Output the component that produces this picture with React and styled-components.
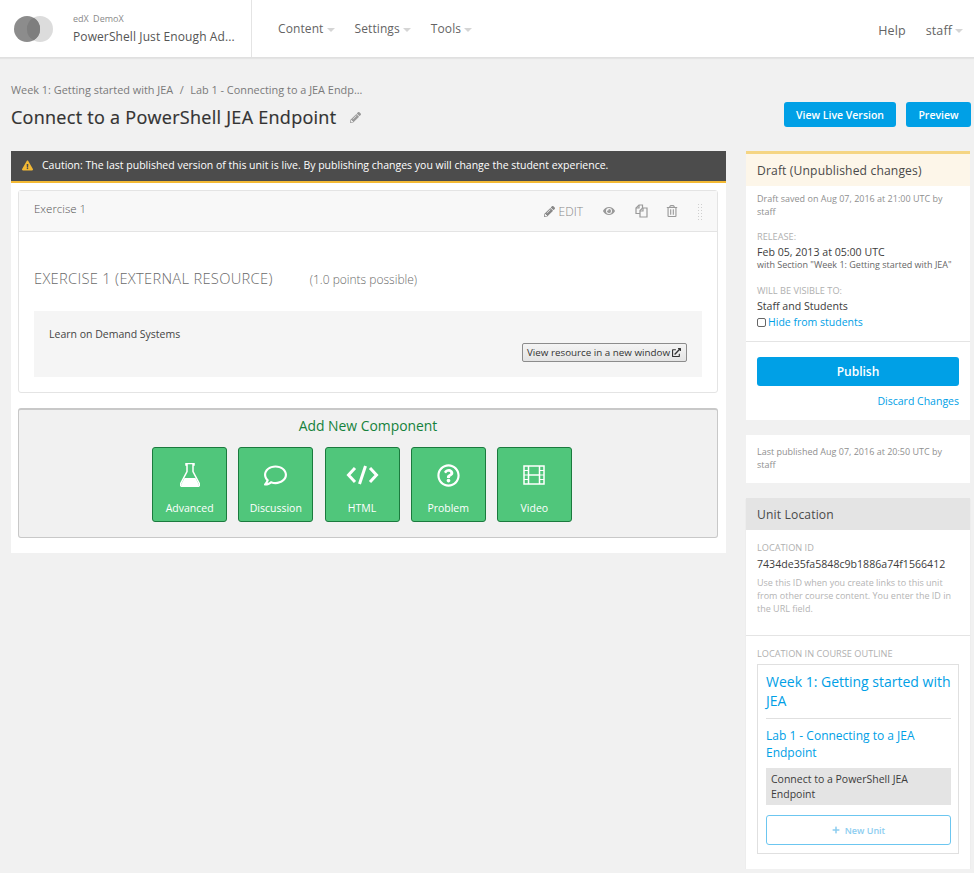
import React from 'react';
import styled, { createGlobalStyle } from 'styled-components';
import {
  FaPencilAlt,
  FaEye,
  FaRegTrashAlt,
  FaRegComment,
  FaRegQuestionCircle,
  FaExclamationTriangle,
  FaExternalLinkAlt,
  FaPlus,
} from 'react-icons/fa';

const blue = '#00a0e6';

const GlobalStyle = createGlobalStyle`
  html, body {
    margin: 0;
    padding: 0;
    background: #f1f1f1;
    font-family: "Open Sans", "Liberation Sans", sans-serif;
    color: #3c3c3c;
  }
  * {
    box-sizing: border-box;
  }
`;

const Header = styled.header`
  display: flex;
  align-items: stretch;
  height: 58px;
  background: #fff;
  border-bottom: 1px solid #e0e0e0;
  box-shadow: 0 1px 1px rgba(0, 0, 0, 0.05);
`;

const Brand = styled.div`
  display: flex;
  align-items: center;
  width: 252px;
  padding-left: 14px;
  border-right: 1px solid #e4e4e4;
`;

const CourseInfo = styled.div`
  margin-left: 19px;
  width: 165px;
`;

const Org = styled.div`
  font-size: 9px;
  line-height: 14px;
  color: #8a8a8a;
  word-spacing: 2px;
`;

const CourseName = styled.div`
  margin-top: 2px;
  font-size: 12px;
  line-height: 17px;
  color: #555;
  letter-spacing: 0.1px;
  white-space: nowrap;
`;

const Nav = styled.nav`
  display: flex;
  align-items: center;
  flex: 1;
  padding-left: 26px;
  gap: 20px;
`;

const NavItem = styled.span`
  display: inline-flex;
  align-items: center;
  font-size: ${(props) => props.$size || 12}px;
  color: #646464;
  letter-spacing: 0.1px;
`;

const Caret = styled.i`
  display: inline-block;
  margin-left: 3px;
  margin-top: 2px;
  border-left: 4px solid transparent;
  border-right: 4px solid transparent;
  border-top: 4px solid #d5d5d5;
`;

const UserNav = styled.div`
  display: flex;
  align-items: center;
  gap: 20px;
  padding: 3px 11px 0 0;
`;

const Page = styled.div`
  padding: 0 3px 0 11px;
`;

const TitleBar = styled.div`
  display: flex;
  justify-content: space-between;
  align-items: flex-start;
  padding-top: 24px;
`;

const Crumbs = styled.div`
  font-size: 10.9px;
  line-height: 16px;
  color: #7a7a7a;
  white-space: pre;
`;

const CrumbSep = styled.span`
  margin: 0 6.5px;
`;

const PageTitle = styled.h1`
  display: flex;
  align-items: center;
  margin: 6px 0 0;
  font-size: 18px;
  line-height: 26px;
  font-weight: 400;
  color: #333;
  letter-spacing: 0.28px;
  -webkit-text-stroke: 0.2px #333;
`;

const TitleEdit = styled.span`
  display: inline-flex;
  margin-left: 14px;
  color: #9a9a9a;
  font-size: 11px;
`;

const Actions = styled.div`
  display: flex;
  gap: 10px;
  margin-top: 20px;
`;

const ActionButton = styled.button`
  height: 25px;
  width: ${(props) => props.$width}px;
  padding: 0;
  border: 0;
  border-radius: 3px;
  background: ${blue};
  color: #fff;
  font: 600 10.5px "Open Sans", sans-serif;
`;

const Columns = styled.div`
  display: flex;
  align-items: flex-start;
  gap: 20px;
  margin-top: 21px;
`;

const Main = styled.main`
  width: 715px;
  background: #fff;
  padding-bottom: 15px;
`;

const Alert = styled.div`
  display: flex;
  align-items: center;
  height: 32px;
  padding: 0 0 2px 11px;
  background: #4c4c4c;
  border-bottom: 2px solid #f3b934;
  color: #fff;
  font-size: 10.5px;
`;

const AlertIcon = styled.span`
  display: inline-flex;
  margin-right: 9px;
  color: #f3b934;
  font-size: 11px;
`;

const Block = styled.section`
  margin: 7px 8px 0 7px;
  border: 1px solid #e4e4e4;
  border-radius: 3px;
  background: #fff;
  height: 203px;
`;

const BlockHead = styled.div`
  display: flex;
  justify-content: space-between;
  align-items: center;
  height: 41px;
  padding: 0 14px 0 15px;
  background: #f8f8f8;
  border-bottom: 1px solid #e4e4e4;
`;

const BlockName = styled.div`
  margin-top: -6px;
  font-size: 11.5px;
  font-weight: 300;
  color: #555;
`;

const BlockTools = styled.div`
  display: flex;
  align-items: center;
  color: #9a9a9a;
  font-size: 11px;
`;

const EditTool = styled.span`
  display: inline-flex;
  align-items: center;
  gap: 4px;
  font-size: 12px;
  font-weight: 300;
  color: #888;
  margin-right: 20px;
`;

const Tool = styled.span`
  display: inline-flex;
  margin-right: ${(props) => props.$gap}px;
  font-size: 12px;
`;

const Grip = styled.span`
  display: block;
  width: 6px;
  height: 17px;
  background-image: radial-gradient(#cfcfcf 1px, transparent 1px);
  background-size: 3px 3px;
`;

const BlockBody = styled.div`
  padding: 36px 15px 0;
`;

const ProblemTitle = styled.div`
  display: flex;
  align-items: baseline;
  font-size: 14.7px;
  line-height: 20px;
  font-weight: 300;
  color: #6a6a6a;
  letter-spacing: 0.3px;
`;

const Points = styled.span`
  margin-left: 37px;
  font-size: 12px;
  letter-spacing: 0;
`;

const ResourceBox = styled.div`
  display: flex;
  flex-direction: column;
  height: 66px;
  margin-top: 21px;
  padding: 15px 15px 0;
  background: #f5f5f5;
`;

const ResourceText = styled.div`
  font-size: 10.5px;
  line-height: 16px;
  color: #444;
`;

const ResourceButton = styled.button`
  display: inline-flex;
  align-items: center;
  align-self: flex-end;
  gap: 2px;
  width: 165px;
  height: 19px;
  margin-top: 1px;
  padding: 0 4px;
  background: linear-gradient(#f4f4f4, #e4e4e4);
  border: 1px solid #8c8c8c;
  border-radius: 2px;
  color: #333;
  font: 400 9.8px "Open Sans", sans-serif;
  white-space: nowrap;
`;

const AddPanel = styled.section`
  height: 130px;
  margin: 15px 8px 0 7px;
  padding-top: 6px;
  background: #f1f1f1;
  border: 1px solid #c8c8c8;
  border-top-width: 2px;
  border-radius: 3px;
`;

const AddTitle = styled.div`
  text-align: center;
  font-size: 13.9px;
  line-height: 19px;
  color: #15823c;
`;

const AddGrid = styled.div`
  display: flex;
  justify-content: center;
  gap: 11.2px;
  margin-top: 12px;
  padding-right: 12px;
`;

const AddButton = styled.button`
  display: flex;
  flex-direction: column;
  align-items: center;
  width: 75px;
  height: 75px;
  padding: 15px 0 0;
  background: #50c67b;
  border: 1px solid #1b7a3e;
  border-radius: 3px;
  color: #fff;
  font: 400 10.5px "Open Sans", sans-serif;
`;

const AddIcon = styled.span`
  display: flex;
  align-items: center;
  justify-content: center;
  height: 24px;
  font-size: 23px;
`;

const AddLabel = styled.span`
  margin-top: 14px;
  line-height: 14px;
`;

const Sidebar = styled.aside`
  display: flex;
  flex-direction: column;
  gap: 15px;
  width: 224px;
`;

const Card = styled.div`
  background: #fff;
  border-top: ${(props) => (props.$accent ? '3px solid #f5d583' : '0')};
  box-shadow: ${(props) => (props.$shadow ? '0 1px 1px rgba(0, 0, 0, 0.1)' : 'none')};
`;

const CardHead = styled.div`
  display: flex;
  align-items: center;
  height: 32px;
  padding: 0 11px;
  background: ${(props) => props.$bg};
  font-size: 12.1px;
  color: #4a4a4a;
  letter-spacing: 0.15px;
`;

const Section = styled.div`
  padding: ${(props) => props.$padding};
  border-bottom: ${(props) => (props.$rule ? '1px solid #e4e4e4' : '0')};
`;

const Small = styled.div`
  font-size: 9px;
  line-height: 13px;
  color: #8f8f8f;
`;

const Label = styled.div`
  margin-top: ${(props) => props.$top || 0}px;
  font-size: 9.2px;
  line-height: 13px;
  color: #b0b0b0;
  text-transform: uppercase;
`;

const Value = styled.div`
  margin-top: ${(props) => props.$top || 0}px;
  font-size: 10.6px;
  line-height: 16px;
  color: #3c3c3c;
`;

const Detail = styled.div`
  margin-top: -1px;
  font-size: 9px;
  line-height: 12px;
  color: #666;
  white-space: nowrap;
`;

const HideRow = styled.div`
  display: flex;
  align-items: center;
  font-size: 10.5px;
  line-height: 16px;
  color: ${blue};
`;

const Check = styled.span`
  display: inline-block;
  width: 9px;
  height: 9px;
  margin-right: 2px;
  background: #fff;
  border: 1px solid #666;
  border-radius: 2px;
`;

const PublishButton = styled.button`
  display: block;
  width: 202px;
  height: 29px;
  padding: 0 0 1px;
  background: ${blue};
  border: 0;
  border-radius: 3px;
  color: #fff;
  font: 600 12px "Open Sans", sans-serif;
`;

const Discard = styled.div`
  margin-top: 7px;
  text-align: right;
  font-size: 10.5px;
  line-height: 16px;
  color: ${blue};
`;

const Hint = styled.div`
  margin-top: 4px;
  font-size: 9px;
  line-height: 13px;
  color: #b4b4b4;
`;

const Outline = styled.div`
  margin-top: 4px;
  padding: 7px 7px 8px 8px;
  border: 1px solid #e0e0e0;
`;

const OutlineSection = styled.div`
  padding-bottom: 8px;
  border-bottom: 1px solid #e0e0e0;
  font-size: 14px;
  line-height: 19px;
  color: ${blue};
`;

const OutlineSub = styled.div`
  margin-top: 8px;
  font-size: 12px;
  line-height: 17px;
  color: ${blue};
`;

const OutlineUnit = styled.div`
  margin-top: 7px;
  padding: 4px 5px 3px;
  background: #e4e4e4;
  font-size: 10.5px;
  line-height: 15px;
  color: #3c3c3c;
`;

const NewUnit = styled.button`
  display: flex;
  align-items: center;
  justify-content: center;
  gap: 5px;
  width: 100%;
  height: 30px;
  margin-top: 10px;
  padding: 0;
  background: #fff;
  border: 1px solid #6cc6f0;
  border-radius: 3px;
  color: #8ccdf0;
  font: 600 9px "Open Sans", sans-serif;
`;

function Logo() {
  return (
    <svg width="40" height="28" viewBox="0 0 40 28">
      <circle cx="26" cy="14" r="13" fill="#dcdcdc" />
      <circle cx="13" cy="14" r="13" fill="#8c8c8c" />
      <path d="M19.5 2.7a13 13 0 0 1 0 22.6a13 13 0 0 1 0-22.6z" fill="#7e7e7e" />
    </svg>
  );
}

function CopyIcon() {
  return (
    <svg width="13" height="14" viewBox="0 0 13 14" fill="none" stroke="currentColor" strokeWidth="1.2">
      <path d="M5 9.5H1V4l3-3h3.5v3" />
      <path d="M4 1v3H1" />
      <path d="M5 13V6.5L7.5 4H12v9z" />
      <path d="M8 4v3H5" />
    </svg>
  );
}

function FlaskIcon() {
  return (
    <svg width="20" height="24" viewBox="0 0 20 24">
      <path d="M6 .5h8v1.6h-1v6.4l6.4 12.2c.6 1.3-.2 2.8-1.8 2.8H2.4C.8 23.5 0 22 .6 20.7L7 8.5V2.1H6z" fill="none" stroke="#fff" strokeWidth="1.5" />
      <path d="M4.5 15h11l3.3 6.2c.4.9-.2 1.8-1.2 1.8H2.4c-1 0-1.6-.9-1.2-1.8z" fill="#fff" />
    </svg>
  );
}

function CodeIcon() {
  return (
    <svg width="33" height="20" viewBox="0 0 33 20" fill="none" stroke="#fff" strokeWidth="3">
      <polyline points="9,3 2.5,10 9,17" />
      <polyline points="24,3 30.5,10 24,17" />
      <line x1="19.5" y1="1" x2="13.5" y2="19" />
    </svg>
  );
}

function FilmIcon() {
  return (
    <svg width="22" height="20" viewBox="0 0 22 20" fill="none" stroke="#fff" strokeWidth="1.5">
      <rect x="1" y="1" width="20" height="18" />
      <path d="M5.5 1v18M16.5 1v18M5.5 10h11" />
      <path d="M1 5.5h4.5M1 10h4.5M1 14.5h4.5M16.5 5.5H21M16.5 10H21M16.5 14.5H21" strokeWidth="1.2" />
    </svg>
  );
}

const addItems = [
  { label: 'Advanced', icon: <FlaskIcon /> },
  { label: 'Discussion', icon: <FaRegComment /> },
  { label: 'HTML', icon: <CodeIcon /> },
  { label: 'Problem', icon: <FaRegQuestionCircle /> },
  { label: 'Video', icon: <FilmIcon /> },
];

export default function App() {
  return (
    <>
      <GlobalStyle />
      <Header>
        <Brand>
          <Logo />
          <CourseInfo>
            <Org>edX DemoX</Org>
            <CourseName>PowerShell Just Enough Ad...</CourseName>
          </CourseInfo>
        </Brand>
        <Nav>
          <NavItem>Content<Caret /></NavItem>
          <NavItem>Settings<Caret /></NavItem>
          <NavItem>Tools<Caret /></NavItem>
        </Nav>
        <UserNav>
          <NavItem $size={12.5}>Help</NavItem>
          <NavItem $size={12.5}>staff<Caret /></NavItem>
        </UserNav>
      </Header>
      <Page>
        <TitleBar>
          <div>
            <Crumbs>Week 1: Getting started with JEA<CrumbSep>/</CrumbSep>Lab 1 - Connecting to a JEA Endp...</Crumbs>
            <PageTitle>
              Connect to a PowerShell JEA Endpoint
              <TitleEdit><FaPencilAlt /></TitleEdit>
            </PageTitle>
          </div>
          <Actions>
            <ActionButton $width={112}>View Live Version</ActionButton>
            <ActionButton $width={65}>Preview</ActionButton>
          </Actions>
        </TitleBar>
        <Columns>
          <Main>
            <Alert>
              <AlertIcon><FaExclamationTriangle /></AlertIcon>
              Caution: The last published version of this unit is live. By publishing changes you will change the student experience.
            </Alert>
            <Block>
              <BlockHead>
                <BlockName>Exercise 1</BlockName>
                <BlockTools>
                  <EditTool><FaPencilAlt size={11} />EDIT</EditTool>
                  <Tool $gap={20}><FaEye /></Tool>
                  <Tool $gap={18}><CopyIcon /></Tool>
                  <Tool $gap={19}><FaRegTrashAlt /></Tool>
                  <Grip />
                </BlockTools>
              </BlockHead>
              <BlockBody>
                <ProblemTitle>
                  EXERCISE 1 (EXTERNAL RESOURCE)
                  <Points>(1.0 points possible)</Points>
                </ProblemTitle>
                <ResourceBox>
                  <ResourceText>Learn on Demand Systems</ResourceText>
                  <ResourceButton>View resource in a new window <FaExternalLinkAlt size={9} /></ResourceButton>
                </ResourceBox>
              </BlockBody>
            </Block>
            <AddPanel>
              <AddTitle>Add New Component</AddTitle>
              <AddGrid>
                {addItems.map((item) => (
                  <AddButton key={item.label}>
                    <AddIcon>{item.icon}</AddIcon>
                    <AddLabel>{item.label}</AddLabel>
                  </AddButton>
                ))}
              </AddGrid>
            </AddPanel>
          </Main>
          <Sidebar>
            <Card $accent>
              <CardHead $bg="#fdf6e9">Draft (Unpublished changes)</CardHead>
              <Section $padding="6px 11px 11px" $rule>
                <Small>Draft saved on Aug 07, 2016 at 21:00 UTC by staff</Small>
                <Label $top={12}>Release:</Label>
                <Value $top={1}>Feb 05, 2013 at 05:00 UTC</Value>
                <Detail>with Section "Week 1: Getting started with JEA"</Detail>
                <Label $top={13}>Will be visible to:</Label>
                <Value $top={1}>Staff and Students</Value>
                <HideRow><Check />Hide from students</HideRow>
              </Section>
              <Section $padding="15px 11px 11px">
                <PublishButton>Publish</PublishButton>
                <Discard>Discard Changes</Discard>
              </Section>
            </Card>
            <Card>
              <Section $padding="10px 11px 12px">
                <Small>Last published Aug 07, 2016 at 20:50 UTC by staff</Small>
              </Section>
            </Card>
            <Card $shadow>
              <CardHead $bg="#e4e4e4">Unit Location</CardHead>
              <Section $padding="11px 11px 20px" $rule>
                <Label>Location ID</Label>
                <Value $top={2}>7434de35fa5848c9b1886a74f1566412</Value>
                <Hint>Use this ID when you create links to this unit from other course content. You enter the ID in the URL field.</Hint>
              </Section>
              <Section $padding="11px 11px 15px">
                <Label>Location in course outline</Label>
                <Outline>
                  <OutlineSection>Week 1: Getting started with JEA</OutlineSection>
                  <OutlineSub>Lab 1 - Connecting to a JEA Endpoint</OutlineSub>
                  <OutlineUnit>Connect to a PowerShell JEA Endpoint</OutlineUnit>
                  <NewUnit><FaPlus size={8} />New Unit</NewUnit>
                </Outline>
              </Section>
            </Card>
          </Sidebar>
        </Columns>
      </Page>
    </>
  );
}
